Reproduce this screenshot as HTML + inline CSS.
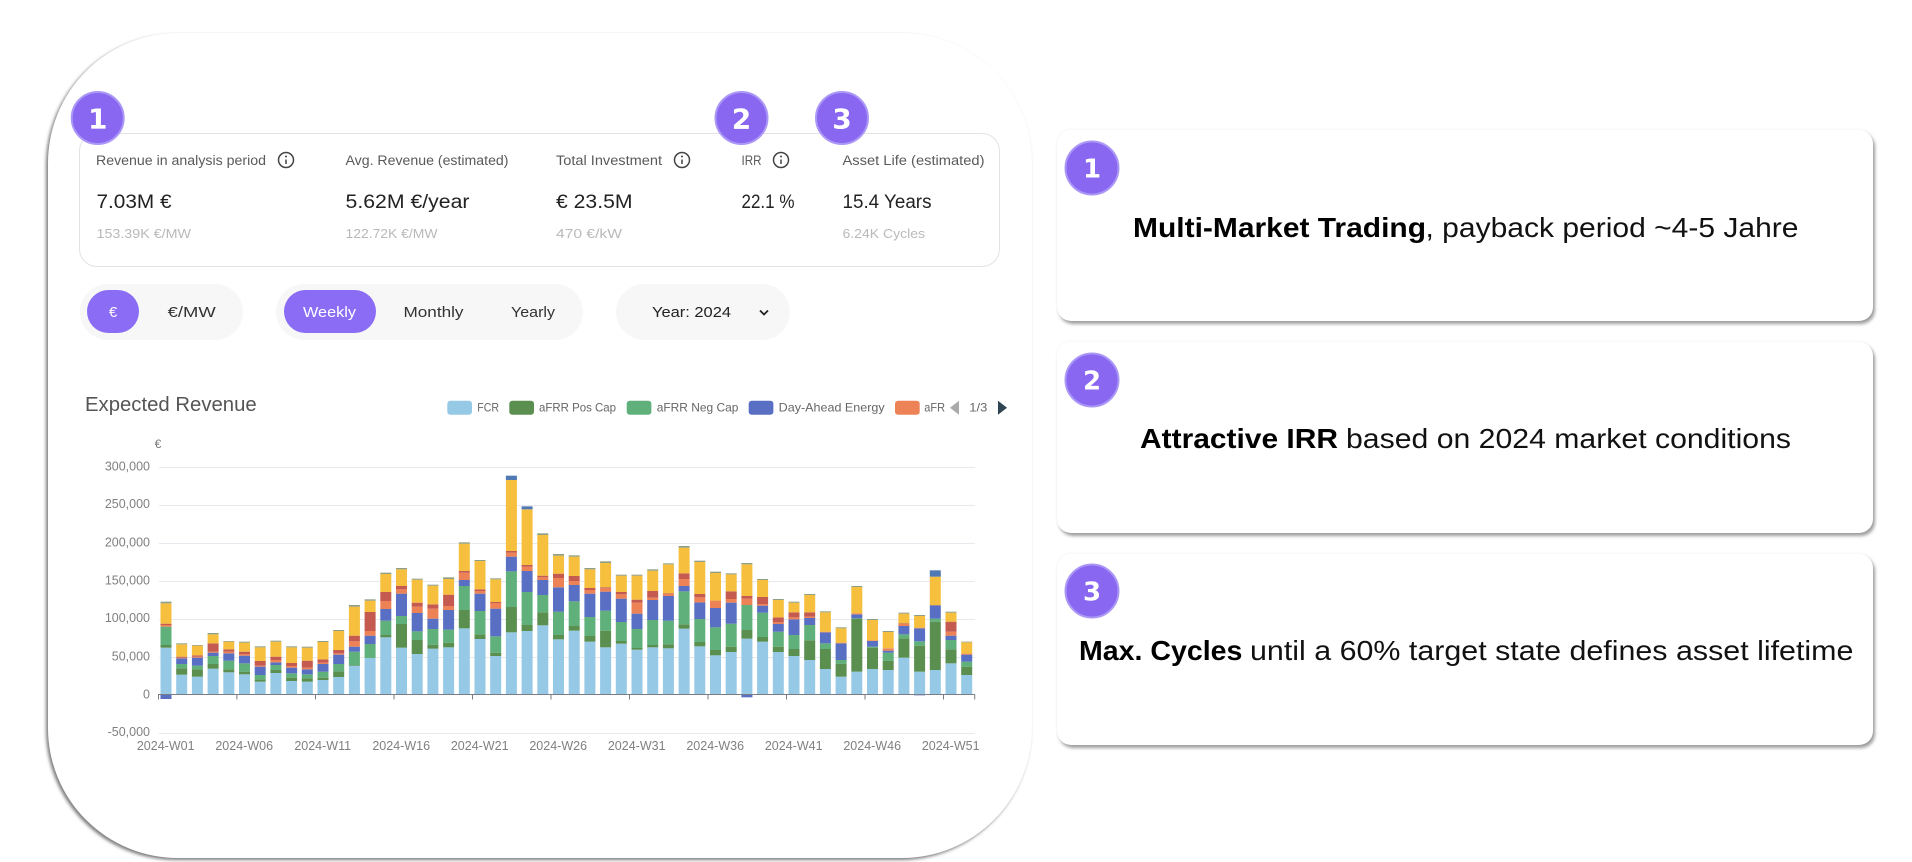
<!DOCTYPE html>
<html lang="en">
<head>
<meta charset="utf-8">
<title>Revenue Overview</title>
<style>
html,body{margin:0;padding:0;background:#fff;}
body{width:1912px;height:862px;overflow:hidden;position:relative;font-family:"Liberation Sans",sans-serif;}
.outer{position:absolute;left:48px;top:33px;width:984px;height:825px;background:#fff;border-radius:130px;box-shadow:-2px 2px 3px rgba(0,0,0,.5),0 0 2px rgba(0,0,0,.025);}
.card{position:absolute;left:1057px;width:816px;height:190px;background:#fff;border-radius:14px;box-shadow:2px 3px 3px rgba(0,0,0,.38),0 -1px 3px rgba(0,0,0,.04);}
.metric{position:absolute;left:79px;top:133px;width:919px;height:132px;border:1px solid #e3e3e6;border-radius:18px;background:#fff;}
.pill{position:absolute;top:284px;height:56px;background:#f7f7f7;border-radius:28px;}
.active{position:absolute;top:290px;height:43px;background:#8a6cf5;border-radius:22px;}
svg.main{position:absolute;left:0;top:0;filter:blur(.3px);}
svg text{font-family:"Liberation Sans",sans-serif;}
.l{font-size:13.5px;fill:#5a5a5a;}
.v{font-size:19px;fill:#222;}
.s{font-size:13px;fill:#b9b9b9;}
.p{font-size:15px;fill:#333;}
svg text.d{font-family:"DejaVu Sans",sans-serif;font-weight:bold;fill:#fff;text-anchor:middle;}
.big{font-size:27.5px;fill:#111;}
.bigb{font-size:27.5px;font-weight:bold;fill:#000;}
.lg{font-size:12px;fill:#666;}
.y{font-size:12.5px;fill:#808080;text-anchor:end;}
.x{font-size:12.5px;fill:#808080;text-anchor:middle;}
</style>
</head>
<body>
<div class="outer"></div>
<div class="metric"></div>
<div class="pill" style="left:80px;width:163px"></div>
<div class="pill" style="left:276px;width:307px"></div>
<div class="pill" style="left:616px;width:174px"></div>
<div class="active" style="left:87px;width:52px"></div>
<div class="active" style="left:284px;width:92px"></div>
<div class="card" style="top:130px;height:191px"></div>
<div class="card" style="top:342px;height:191px"></div>
<div class="card" style="top:554px;height:191px"></div>

<svg class="main" width="1912" height="862" viewBox="0 0 1912 862" xmlns="http://www.w3.org/2000/svg">
  <!-- metric labels -->
  <text class="l" x="96" y="165" textLength="170" lengthAdjust="spacingAndGlyphs">Revenue in analysis period</text>
  <text class="l" x="345.5" y="165" textLength="163" lengthAdjust="spacingAndGlyphs">Avg. Revenue (estimated)</text>
  <text class="l" x="556" y="165" textLength="106" lengthAdjust="spacingAndGlyphs">Total Investment</text>
  <text class="l" x="741.5" y="165" textLength="20" lengthAdjust="spacingAndGlyphs">IRR</text>
  <text class="l" x="842.5" y="165" textLength="142" lengthAdjust="spacingAndGlyphs">Asset Life (estimated)</text>

  <text class="v" x="96.5" y="208" textLength="75" lengthAdjust="spacingAndGlyphs">7.03M €</text>
  <text class="v" x="345.5" y="208" textLength="124" lengthAdjust="spacingAndGlyphs">5.62M €/year</text>
  <text class="v" x="556" y="208" textLength="76.5" lengthAdjust="spacingAndGlyphs">€ 23.5M</text>
  <text class="v" x="741.5" y="208" textLength="53" lengthAdjust="spacingAndGlyphs">22.1 %</text>
  <text class="v" x="842.5" y="208" textLength="89" lengthAdjust="spacingAndGlyphs">15.4 Years</text>

  <text class="s" x="96.5" y="238" textLength="94.5" lengthAdjust="spacingAndGlyphs">153.39K €/MW</text>
  <text class="s" x="345.5" y="238" textLength="92" lengthAdjust="spacingAndGlyphs">122.72K €/MW</text>
  <text class="s" x="556" y="238" textLength="66" lengthAdjust="spacingAndGlyphs">470 €/kW</text>
  <text class="s" x="842.5" y="238" textLength="82.5" lengthAdjust="spacingAndGlyphs">6.24K Cycles</text>

  <!-- info icons -->
  <g fill="none" stroke="#444" stroke-width="1.5">
    <circle cx="286" cy="160" r="7.5"/><path d="M286 159.5v4.5"/>
    <circle cx="682" cy="160" r="7.5"/><path d="M682 159.5v4.5"/>
    <circle cx="781" cy="160" r="7.5"/><path d="M781 159.5v4.5"/>
  </g>
  <g fill="#444"><circle cx="286" cy="156.5" r="1"/><circle cx="682" cy="156.5" r="1"/><circle cx="781" cy="156.5" r="1"/></g>

  <!-- pills text -->
  <text class="p" x="113" y="317" style="fill:#fff;text-anchor:middle" font-size="16">€</text>
  <text class="p" x="167.7" y="317" textLength="48" lengthAdjust="spacingAndGlyphs">€/MW</text>
  <text class="p" x="303" y="317" textLength="53" lengthAdjust="spacingAndGlyphs" style="fill:#fff">Weekly</text>
  <text class="p" x="403.5" y="317" textLength="60" lengthAdjust="spacingAndGlyphs">Monthly</text>
  <text class="p" x="511" y="317" textLength="44" lengthAdjust="spacingAndGlyphs">Yearly</text>
  <text class="p" x="652" y="317" textLength="79" lengthAdjust="spacingAndGlyphs" style="fill:#222">Year: 2024</text>
  <path d="M760 310.5l4 4 4-4" fill="none" stroke="#222" stroke-width="1.8"/>

  <!-- chart title + legend -->
  <text x="85" y="411" font-size="20" fill="#555" textLength="171.7" lengthAdjust="spacingAndGlyphs">Expected Revenue</text>
  <rect x="447.3" y="400.7" width="24.7" height="14" rx="3" fill="#96c9e6"/>
  <text class="lg" x="477.3" y="411.5" textLength="21.7" lengthAdjust="spacingAndGlyphs">FCR</text>
  <rect x="509.3" y="400.7" width="24.7" height="14" rx="3" fill="#5a8f50"/>
  <text class="lg" x="539" y="411.5" textLength="77" lengthAdjust="spacingAndGlyphs">aFRR Pos Cap</text>
  <rect x="626.7" y="400.7" width="24.7" height="14" rx="3" fill="#5fb07a"/>
  <text class="lg" x="656.7" y="411.5" textLength="81.7" lengthAdjust="spacingAndGlyphs">aFRR Neg Cap</text>
  <rect x="748.7" y="400.7" width="24.7" height="14" rx="3" fill="#586fc4"/>
  <text class="lg" x="778.7" y="411.5" textLength="106" lengthAdjust="spacingAndGlyphs">Day-Ahead Energy</text>
  <rect x="895" y="400.7" width="24.7" height="14" rx="3" fill="#ec8255"/>
  <text class="lg" x="924.3" y="411.5" textLength="20.7" lengthAdjust="spacingAndGlyphs">aFR</text>
  <path d="M950 407.7l9-7v14z" fill="#aaa"/>
  <text class="lg" x="969.3" y="411.5" textLength="18" lengthAdjust="spacingAndGlyphs">1/3</text>
  <path d="M1007 407.7l-9-7v14z" fill="#2f4554"/>

  <!-- axes -->
  <text x="158" y="448" font-size="12" fill="#777" text-anchor="middle">€</text>
  <g stroke="#e7e9ee" stroke-width="1">
    <path d="M159 467.5H975M159 505.5H975M159 543.5H975M159 581.5H975M159 619.5H975M159 657.5H975M159 733.5H975"/>
  </g>
  <g>
    <text class="y" x="150" y="470.5">300,000</text>
    <text class="y" x="150" y="508">250,000</text>
    <text class="y" x="150" y="546.5">200,000</text>
    <text class="y" x="150" y="584.5">150,000</text>
    <text class="y" x="150" y="622">100,000</text>
    <text class="y" x="150" y="660.5">50,000</text>
    <text class="y" x="150" y="698.5">0</text>
    <text class="y" x="150" y="736">-50,000</text>
  </g>

  <g id="bars"></g>

  <path d="M158 694.5H975M158.5 694.5v5M236.9 694.5v5M315.5 694.5v5M394 694.5v5M472.5 694.5v5M551 694.5v5M629.5 694.5v5M708 694.5v5M786.5 694.5v5M865 694.5v5M943.5 694.5v5M974.7 694.5v5" fill="none" stroke="#7a7c86" stroke-width="1"/>

  <g>
    <text class="x" x="165.7" y="750">2024-W01</text>
    <text class="x" x="244.2" y="750">2024-W06</text>
    <text class="x" x="322.7" y="750">2024-W11</text>
    <text class="x" x="401.2" y="750">2024-W16</text>
    <text class="x" x="479.7" y="750">2024-W21</text>
    <text class="x" x="558.2" y="750">2024-W26</text>
    <text class="x" x="636.7" y="750">2024-W31</text>
    <text class="x" x="715.2" y="750">2024-W36</text>
    <text class="x" x="793.7" y="750">2024-W41</text>
    <text class="x" x="872.2" y="750">2024-W46</text>
    <text class="x" x="950.7" y="750">2024-W51</text>
  </g>

  <!-- numbered circles -->
  <g fill="#8a67f0" stroke="#ab97f6" stroke-width="2">
    <circle cx="97.7" cy="118" r="26"/>
    <circle cx="741.5" cy="118" r="26"/>
    <circle cx="842" cy="118" r="26"/>
    <circle cx="1092" cy="168" r="26.5"/>
    <circle cx="1092" cy="380" r="26.5"/>
    <circle cx="1092" cy="591" r="26.5"/>
  </g>
  <text class="d" x="97.7" y="128.5" font-size="28">1</text>
  <text class="d" x="741.5" y="128.5" font-size="28">2</text>
  <text class="d" x="842" y="128.5" font-size="28">3</text>
  <text class="d" x="1092" y="177.5" font-size="26">1</text>
  <text class="d" x="1092" y="389.5" font-size="26">2</text>
  <text class="d" x="1092" y="600.5" font-size="26">3</text>

  <!-- right card text -->
  <text class="bigb" x="1133" y="237" textLength="293" lengthAdjust="spacingAndGlyphs">Multi-Market Trading</text>
  <text class="big" x="1425.5" y="237" textLength="373" lengthAdjust="spacingAndGlyphs">, payback period ~4-5 Jahre</text>
  <text class="bigb" x="1140" y="448" textLength="198" lengthAdjust="spacingAndGlyphs">Attractive IRR</text>
  <text class="big" x="1346" y="448" textLength="445" lengthAdjust="spacingAndGlyphs">based on 2024 market conditions</text>
  <text class="bigb" x="1079" y="660" textLength="163.4" lengthAdjust="spacingAndGlyphs">Max. Cycles</text>
  <text class="big" x="1250" y="660" textLength="603.4" lengthAdjust="spacingAndGlyphs">until a 60% target state defines asset lifetime</text>
</svg>

<script>
(function(){
var C=["#96c9e6","#5a8f50","#5fb07a","#586fc4","#ec8255","#c45a50","#f6bf3d","#8f9f86"];
var D=[
[803,795,740,740,735,731,670,665],[884,865,852,835,833,830,793,790],[890,868,857,833,830,826,797,795],
[866,852,828,818,815,790,763,759],[877,868,842,820,815,808,785,783],[883,875,850,827,822,815,788,785],
[905,898,885,860,857,843,802,799],[879,870,855,847,840,830,785,782],[903,893,880,863,858,849,802,799],
[905,895,883,868,863,842,803,800],[900,893,875,852,848,838,786,783],[891,874,852,824,820,810,753,750],
[857,855,815,800,784,767,680,675],[834,833,792,767,753,696,662,658],[772,765,722,687,663,636,582,578],
[803,732,708,641,628,618,568,564],[822,780,754,699,680,668,599,596],[806,794,747,716,686,673,617,614],
[802,788,749,690,678,644,597,592],[745,690,618,600,578,573,491,487],[777,763,693,641,633,628,543,540],
[828,818,769,686,669,666,598,595],[757,681,574,530,518,513,300,287],[753,735,636,573,560,555,388,379],
[736,697,645,600,592,587,465,460],[778,765,695,622,594,581,527,522],[752,738,664,615,603,588,530,526],
[785,768,711,641,630,624,568,564],[802,752,692,635,625,622,549,544],[791,783,726,656,643,636,587,584],
[809,804,747,701,668,659,587,584],[802,795,720,660,653,633,572,568],[805,793,722,648,642,640,553,550],
[746,733,634,618,597,580,503,498],[799,786,717,667,652,642,546,542],[826,810,742,684,663,662,579,575],
[816,800,731,668,657,634,583,580],[776,750,675,675,656,648,553,549],[785,771,698,677,672,651,600,597],
[816,800,755,732,727,712,660,657],[828,807,765,718,712,697,668,665],[840,781,735,714,710,697,645,642],
[867,807,790,757,755,755,697,694],[890,851,840,790,788,788,745,742],[875,717,715,703,700,700,621,618],
[867,803,800,783,781,781,720,717],[870,842,818,812,806,805,756,753],[833,775,763,738,732,730,701,698],
[875,797,784,745,743,743,708,705],[870,725,716,676,675,675,590,571],[850,808,780,767,755,725,698,695],
[885,860,845,824,822,821,787,785]];
var NEG={0:957,37:952,48:946};
var BLUECAP={22:1,23:1,49:1};
var g=document.getElementById("bars"),ns="http://www.w3.org/2000/svg";
function rect(x,y0,y1,fill){
  var r=document.createElementNS(ns,"rect");
  var a=380+y0/3,b=380+y1/3;
  r.setAttribute("x",x);r.setAttribute("y",a);r.setAttribute("width",11);r.setAttribute("height",Math.max(0,b-a));
  r.setAttribute("fill",fill);g.appendChild(r);
}
D.forEach(function(d,i){
  var x=166+15.7*i-5.5,prev=943;
  d.forEach(function(t,j){
    if(t<prev){
      var c=C[j];
      if(j===7&&BLUECAP[i])c="#4f78b4";
      rect(x,t,prev,c);
    }
    prev=Math.min(prev,t);
  });
  if(NEG[i])rect(x,943,NEG[i],"#586fc4");
});
})();
</script>
</body>
</html>
